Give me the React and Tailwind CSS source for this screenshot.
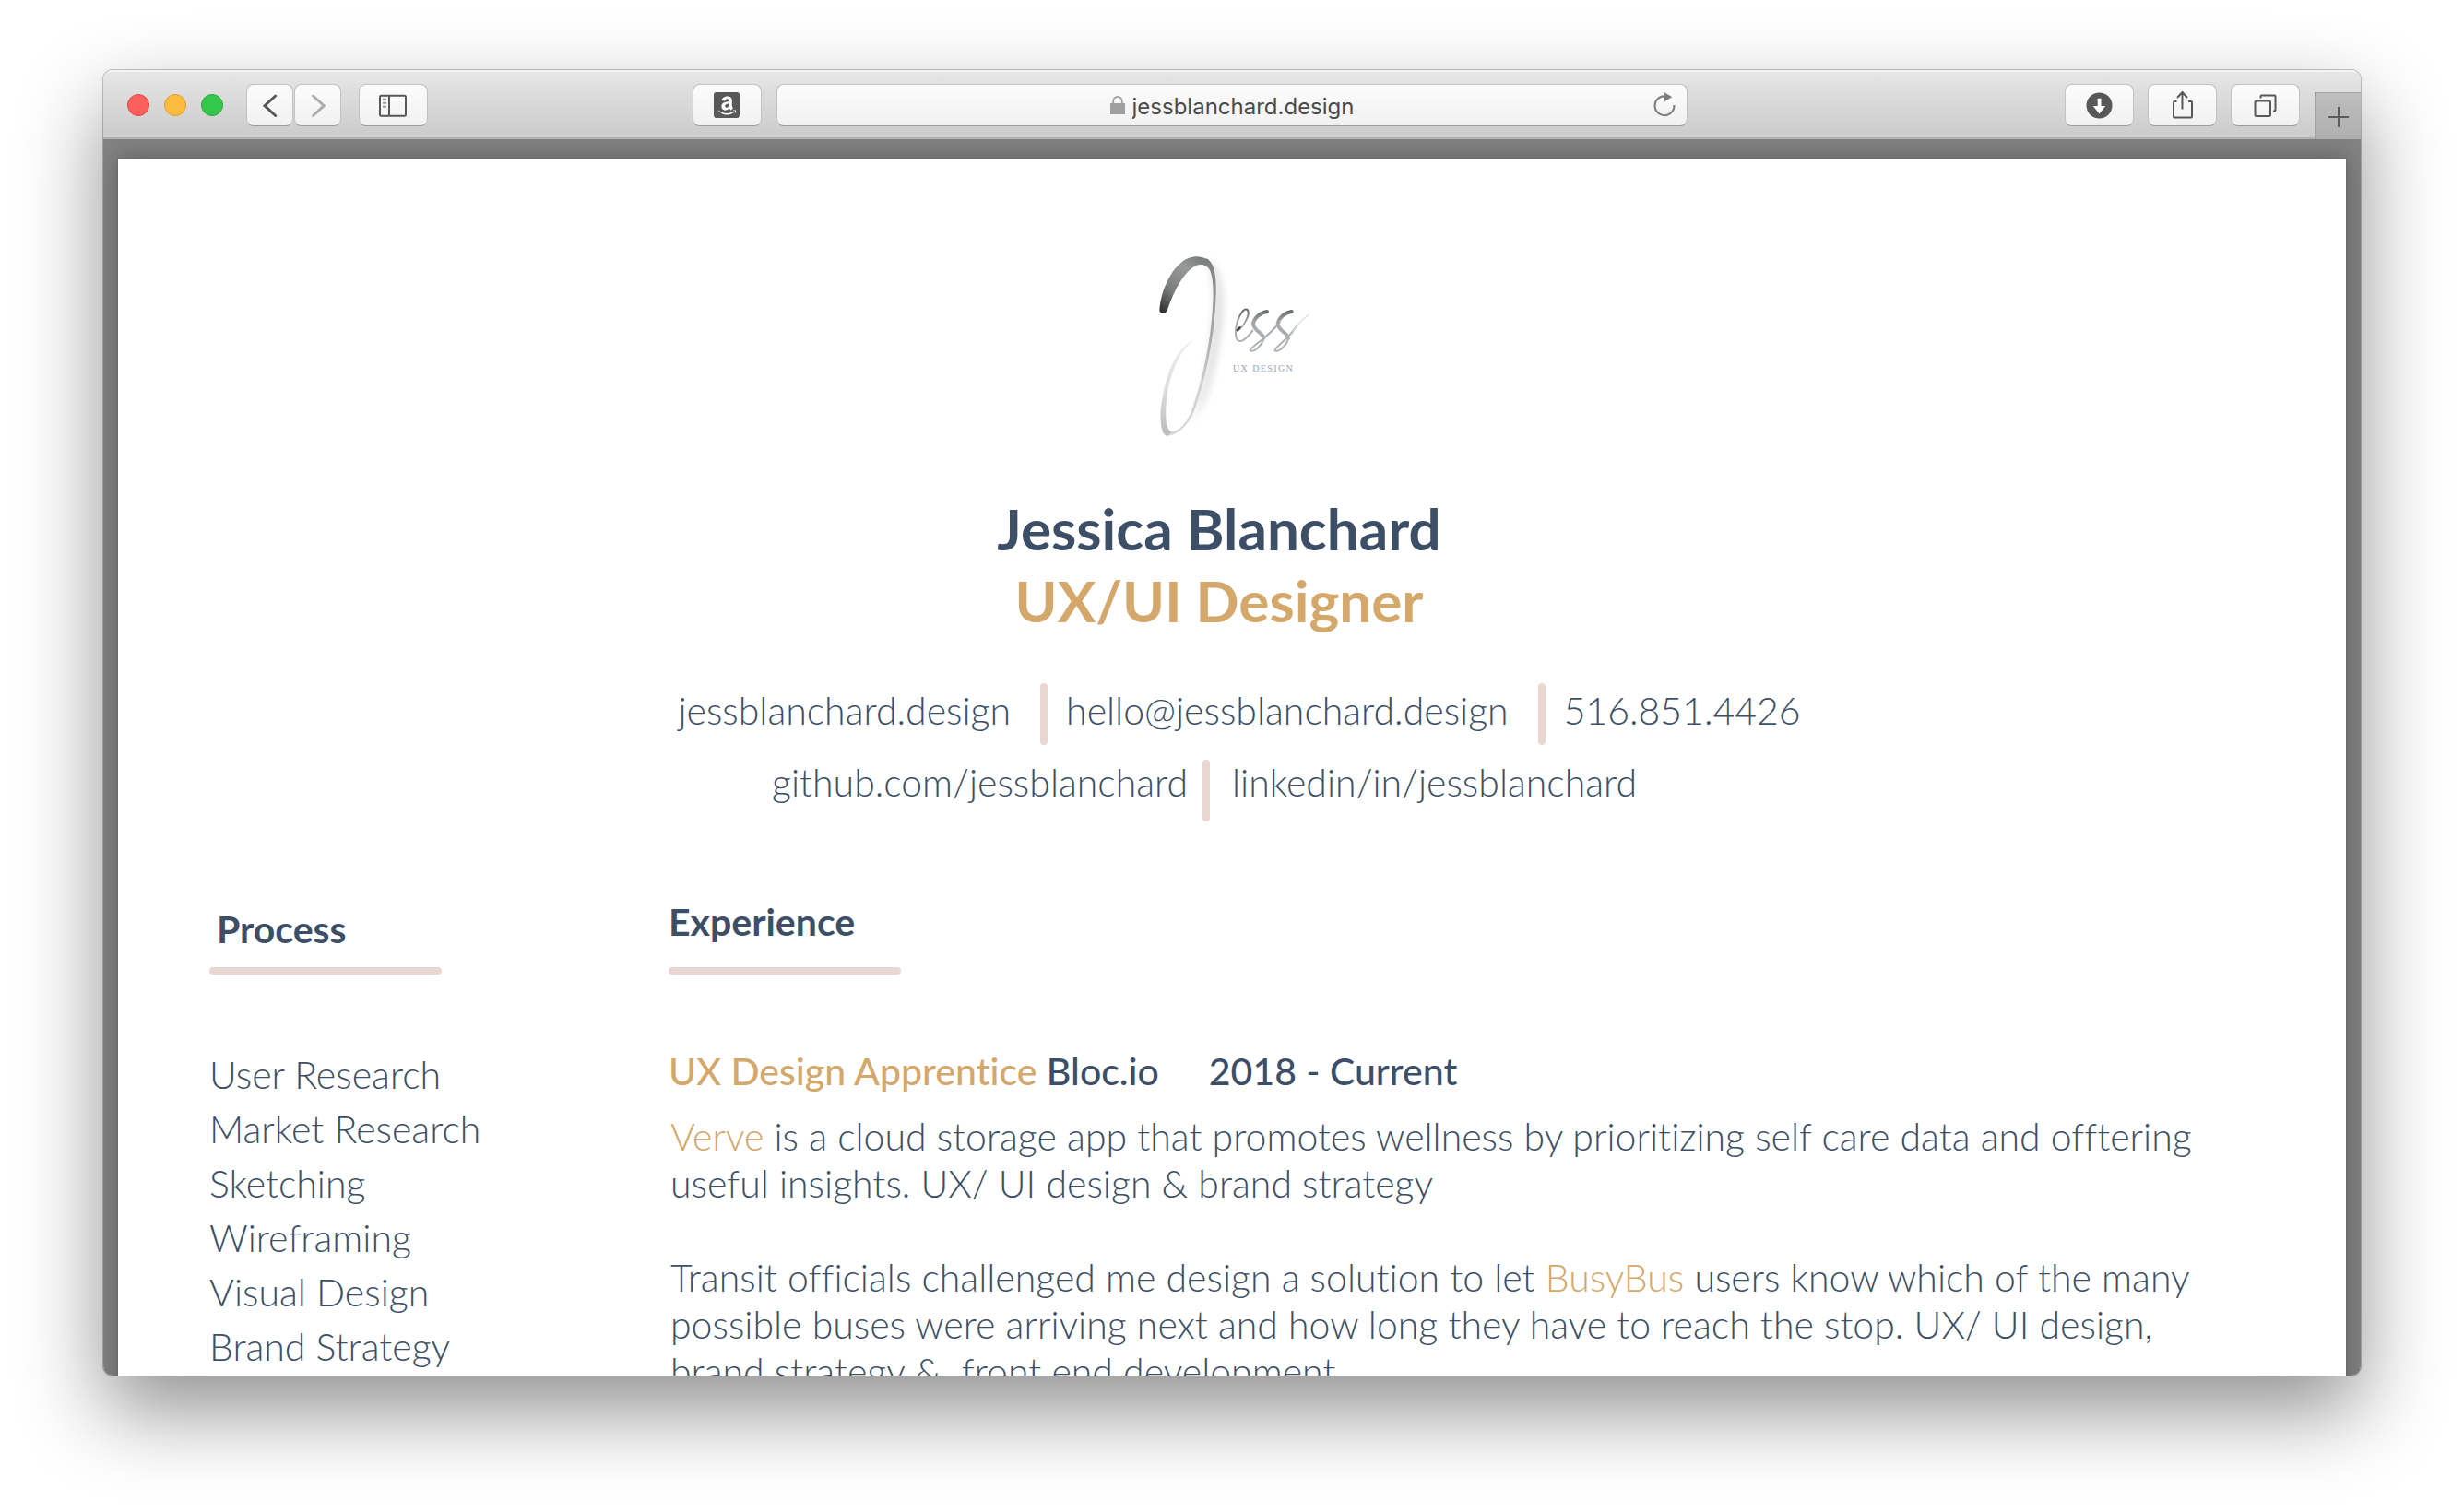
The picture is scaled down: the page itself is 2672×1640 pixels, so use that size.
import React from 'react';
import { FaAmazon } from 'react-icons/fa';

const skills = [
  'User Research',
  'Market Research',
  'Sketching',
  'Wireframing',
  'Visual Design',
  'Brand Strategy',
];

const face =
  'h-[46px] rounded-lg border border-[#c2c2c2] border-b-[#9c9c9c] bg-linear-to-b from-[#fcfcfc] to-[#f1f1f1]';

function ToolButton({ label, narrow, children }) {
  return (
    <button
      type="button"
      aria-label={label}
      className={`${face} flex shrink-0 items-center justify-center ${narrow ? 'w-[51px]' : 'w-[75px]'}`}
    >
      {children}
    </button>
  );
}

function Glyph({ narrow, children, color = 'text-[#585858]' }) {
  return (
    <svg
      viewBox={narrow ? '0 0 50 45' : '0 0 75 45'}
      className={`${narrow ? 'w-[50px]' : 'w-[75px]'} h-[45px] shrink-0 ${color}`}
      fill="none"
      stroke="currentColor"
      strokeWidth="2"
      aria-hidden="true"
    >
      {children}
    </svg>
  );
}

function Toolbar() {
  return (
    <header className="grid h-[75px] shrink-0 grid-cols-[1fr_37vw_1fr] border-b-2 border-[#b0b0b0] bg-linear-to-b from-[#e7e7e7] to-[#cbcbcb] shadow-[inset_0_2px_0_#f4f4f4]">
      <div className="flex items-center pt-[3px] pr-4 pl-[26px]">
        <div className="flex gap-4">
          <button type="button" aria-label="Close" className="size-6 rounded-full border border-[#e2463f] bg-[#fc605c]" />
          <button type="button" aria-label="Minimize" className="size-6 rounded-full border border-[#dfa023] bg-[#fdbc40]" />
          <button type="button" aria-label="Zoom" className="size-6 rounded-full border border-[#27ab35] bg-[#34c84a]" />
        </div>
        <div className="ml-[25px] flex gap-px">
          <ToolButton label="Back" narrow>
            <Glyph narrow>
              <path d="M30.7 12 19 22.7l11.7 10.8" strokeWidth="3" strokeLinecap="round" />
            </Glyph>
          </ToolButton>
          <ToolButton label="Forward" narrow>
            <Glyph narrow color="text-[#adadad]">
              <path d="m19.5 12 11.8 10.700-11.800 10.800" strokeWidth="3" strokeLinecap="round" />
            </Glyph>
          </ToolButton>
        </div>
        <div className="ml-[19px] flex flex-1 justify-between">
          <ToolButton label="Show sidebar">
            <Glyph>
              <rect x="23" y="11.7" width="28" height="22" rx="1.5" />
              <path d="M33 12v22" />
              <path d="M26 15.7h4M26 19.7h4M26 23.7h4" stroke="#9a9a9a" />
            </Glyph>
          </ToolButton>
          <ToolButton label="Amazon">
            <span className="flex size-7 items-center justify-center rounded-[3px] bg-[#585858] text-white">
              <FaAmazon className="size-[23px]" />
            </span>
          </ToolButton>
        </div>
      </div>

      <div className="flex items-center pt-[3px]">
        <div className={`${face} grid flex-1 grid-cols-[1fr_auto_1fr] items-center`}>
          <span />
          <label className="flex items-center gap-2">
            <svg viewBox="0 0 16 20" className="h-5 w-4 text-[#9f9f9f]" aria-hidden="true">
              <path d="M3.2 9V6a4.8 5 0 0 1 9.6 0v3" fill="none" stroke="currentColor" strokeWidth="1.8" />
              <rect y="8" width="16" height="12" rx="0.5" fill="currentColor" />
            </svg>
            <input
              type="text"
              aria-label="Address"
              defaultValue="jessblanchard.design"
              className="field-sizing-content bg-transparent pt-[3px] font-['Inter',sans-serif] text-2xl text-[#4a4a4a] outline-none"
            />
          </label>
          <button type="button" aria-label="Reload" className="mr-2.5 justify-self-end text-[#7d7d7d]">
            <svg viewBox="0 0 26 30" className="h-[30px] w-[26px]" aria-hidden="true">
              <path d="M11.5 5.2A10.5 10.5 0 1 0 22.5 15" fill="none" stroke="currentColor" strokeWidth="2" />
              <path d="m11 .7 9.3 5.6-9.3 5.4z" fill="currentColor" />
            </svg>
          </button>
        </div>
      </div>

      <div className="flex justify-end gap-4">
        <div className="flex items-center gap-[15px] pt-[3px]">
          <ToolButton label="Downloads">
            <Glyph>
              <circle cx="37.5" cy="22.5" r="14" fill="currentColor" stroke="none" />
              <path d="M35.7 14.7h3.8V23h4.7l-6.700 8.500L30.700 23h5z" fill="#fff" stroke="none" />
            </Glyph>
          </ToolButton>
          <ToolButton label="Share">
            <Glyph>
              <path d="M31.500 18H29q-1 0-1 1v15.600q0 1 1 1h18q1 0 1-1V19q0-1-1-1h-3M37.500 26.500V8M32 14l5.500-6 5.500 6" />
            </Glyph>
          </ToolButton>
          <ToolButton label="Show all tabs">
            <Glyph>
              <rect x="26.500" y="17.500" width="16.500" height="16.500" rx="1.500" />
              <path d="M32.500 14.500v-2q0-1 1-1h14q1 0 1 1v15q0 1-1 1H46" />
            </Glyph>
          </ToolButton>
        </div>
        <button
          type="button"
          aria-label="New tab"
          className="flex h-[49px] w-[50px] items-center justify-center self-end border-t border-l border-[#a2a2a2] bg-linear-to-b from-[#bebebe] to-[#b0b0b0]"
        >
          <svg viewBox="0 0 22 22" className="mt-1 size-[22px] text-[#5c5c5c]" stroke="currentColor" strokeWidth="2" aria-hidden="true">
            <path d="M11 0v22M0 11h22" />
          </svg>
        </button>
      </div>
    </header>
  );
}

function Logo() {
  return (
    <svg viewBox="0 0 690 750" className="h-[250px] w-[230px]" role="img" aria-label="Jess UX Design">
      <defs>
        <linearGradient id="ink" x1="110" y1="262" x2="240" y2="90" gradientUnits="userSpaceOnUse">
          <stop offset="0" stopColor="#2c2f2e" />
          <stop offset="0.35" stopColor="#7b7d7c" />
          <stop offset="0.75" stopColor="#979998" />
          <stop offset="1" stopColor="#7d7f7e" />
        </linearGradient>
        <linearGradient id="stem" x1="0" y1="90" x2="0" y2="670" gradientUnits="userSpaceOnUse">
          <stop offset="0" stopColor="#7d7f7e" />
          <stop offset="0.35" stopColor="#a0a2a1" />
          <stop offset="0.75" stopColor="#d2d3d3" />
          <stop offset="1" stopColor="#d6d7d7" />
        </linearGradient>
        <linearGradient id="tail" x1="217" y1="358" x2="120" y2="650" gradientUnits="userSpaceOnUse">
          <stop offset="0" stopColor="#f0f0f0" />
          <stop offset="0.6" stopColor="#dcdddd" />
          <stop offset="1" stopColor="#bdbfbe" />
        </linearGradient>
        <linearGradient id="letter" x1="0" y1="255" x2="0" y2="395" gradientUnits="userSpaceOnUse">
          <stop offset="0" stopColor="#5d6162" />
          <stop offset="0.3" stopColor="#a4a8aa" />
          <stop offset="1" stopColor="#b3b6b8" />
        </linearGradient>
        <filter id="soft" x="-50%" y="-20%" width="200%" height="140%">
          <feGaussianBlur stdDeviation="12" />
        </filter>
      </defs>

      <path
        d="M270 95C325 130 322 260 305 360 288 470 262 560 215 625 260 500 285 340 288 200z"
        fill="#000"
        opacity="0.13"
        filter="url(#soft)"
      />
      <path
        d="M109 260C112 195 150 112 203 90 232 80 262 84 280 112L268 122C258 110 244 108 228 114 188 134 156 196 134 260 129 273 112 273 109 260z"
        fill="url(#ink)"
      />
      <path
        d="M262 90C286 104 294 140 293 200 291 330 262 480 221 590 200 640 160 668 135 668L130 652C160 662 192 640 212 590 255 475 283 320 284 200 283 150 276 122 256 108z"
        fill="url(#stem)"
      />
      <path
        d="M219 358C180 372 146 430 128 500 112 560 108 620 118 650 122 662 128 668 136 668L148 656C130 646 124 610 136 520 150 450 180 388 219 358z"
        fill="url(#tail)"
      />

      <g fill="none" stroke="url(#letter)" strokeLinecap="round" strokeLinejoin="round">
        <path d="M363 326C384 312 406 272 395 258 380 250 359 290 357 328 356 356 366 364 379 358 394 350 401 340 412 326" strokeWidth="6" />
        <path d="M363 324 370 316" stroke="#3e4243" strokeWidth="8" />
        <path d="M458 264C434 266 414 284 413 304 414 328 450 332 448 352 442 378 410 400 404 390 410 374 462 350 500 298" strokeWidth="6" />
        <path d="M459 264C434 268 416 288 414 304 416 326 446 334 448 350" strokeWidth="12" />
        <path d="M538 264C514 266 494 284 493 304 494 328 530 332 528 352 522 378 490 400 484 390 490 374 530 352 556 310" strokeWidth="6" />
        <path d="M539 264C514 268 496 288 494 304 496 326 526 334 528 350" strokeWidth="12" />
        <path d="M540 340C552 310 575 288 594 275" stroke="#e0e1e1" strokeWidth="4" />
      </g>
      <text x="348" y="459" className="fill-[#98a3b5] font-['Liberation_Serif',serif] text-[30px] tracking-[0.14em]">
        UX DESIGN
      </text>
    </svg>
  );
}

function Divider({ className }) {
  return <span aria-hidden="true" className={`h-[67px] w-2 shrink-0 rounded-full bg-[#ead7d1] ${className}`} />;
}

function Rule() {
  return <div className="h-2 w-[252px] rounded-full bg-[#ead7d1]" />;
}

function Resume() {
  return (
    <article className="bg-white pt-[78px] font-['Lato',sans-serif] text-[41px] font-light text-[#3d4f66] shadow-[0_0_24px_rgba(0,0,0,0.3),0_0_0_1px_rgba(0,0,0,0.06)] [font-variant-ligatures:none]">
      <div className="flex flex-col items-center">
        <Logo />
        <h1 className="mt-[34px] pr-7 text-center text-[62px] leading-[78px] font-bold">
          Jessica Blanchard
          <span className="block text-[#d4a76a]">UX/UI Designer</span>
        </h1>
        <address className="mt-[51px] flex flex-col items-center gap-4 not-italic">
          <div className="flex pl-4">
            <a href="#site" className="leading-[60px]">jessblanchard.design</a>
            <Divider className="mr-5 ml-8" />
            <a href="#mail" className="leading-[60px]">hello@jessblanchard.design</a>
            <Divider className="mr-5 ml-8" />
            <a href="#phone" className="leading-[60px]">516.851.4426</a>
          </div>
          <div className="flex pr-[60px]">
            <a href="#github" className="leading-[50px]">github.com/jessblanchard</a>
            <Divider className="mr-6 ml-4" />
            <a href="#linkedin" className="leading-[50px]">linkedin/in/jessblanchard</a>
          </div>
        </address>
      </div>

      <div className="mt-[75px] flex pr-[140px] pl-[99px]">
        <section className="w-[498px] shrink-0">
          <h2 className="pt-2.5 pb-2.5 pl-2 leading-[63px] font-bold">Process</h2>
          <Rule />
          <ul className="mt-[79px] leading-[59px]">
            {skills.map((s) => (
              <li key={s}>{s}</li>
            ))}
          </ul>
        </section>
        <section className="flex-1">
          <h2 className="pt-0.5 pb-[18px] leading-[63px] font-bold">Experience</h2>
          <Rule />
          <h3 className="mt-[79px] leading-[51px] font-medium">
            <span className="text-[#d4a76a]">UX Design Apprentice</span> Bloc.io
            <span className="ml-[54px]">2018 - Current</span>
          </h3>
          <div className="mt-5 flex flex-col gap-[51px] pl-0.5 leading-[51px]">
            <p>
              <a href="#verve" className="text-[#d4a76a]">Verve</a> is a cloud storage app that promotes wellness by
              prioritizing self care data and offtering useful insights. UX/ UI design &amp; brand strategy
            </p>
            <p>
              Transit officials challenged me design a solution to let{' '}
              <a href="#busybus" className="text-[#d4a76a]">BusyBus</a> users know which of the many possible buses
              were arriving next and how long they have to reach the stop. UX/ UI design, brand strategy &amp;&nbsp;
              front end development
            </p>
          </div>
        </section>
      </div>
    </article>
  );
}

export default function App() {
  return (
    <div className="h-screen bg-white px-28 pt-[76px] pb-[148px]">
      <div className="flex h-full flex-col overflow-hidden rounded-[10px] shadow-[0_0_0_1px_rgba(0,0,0,0.22),0_38px_90px_rgba(0,0,0,0.44)]">
        <Toolbar />
        <main className="min-h-0 flex-1 overflow-hidden bg-[#828282] px-4 pt-[21px]">
          <Resume />
        </main>
      </div>
    </div>
  );
}
